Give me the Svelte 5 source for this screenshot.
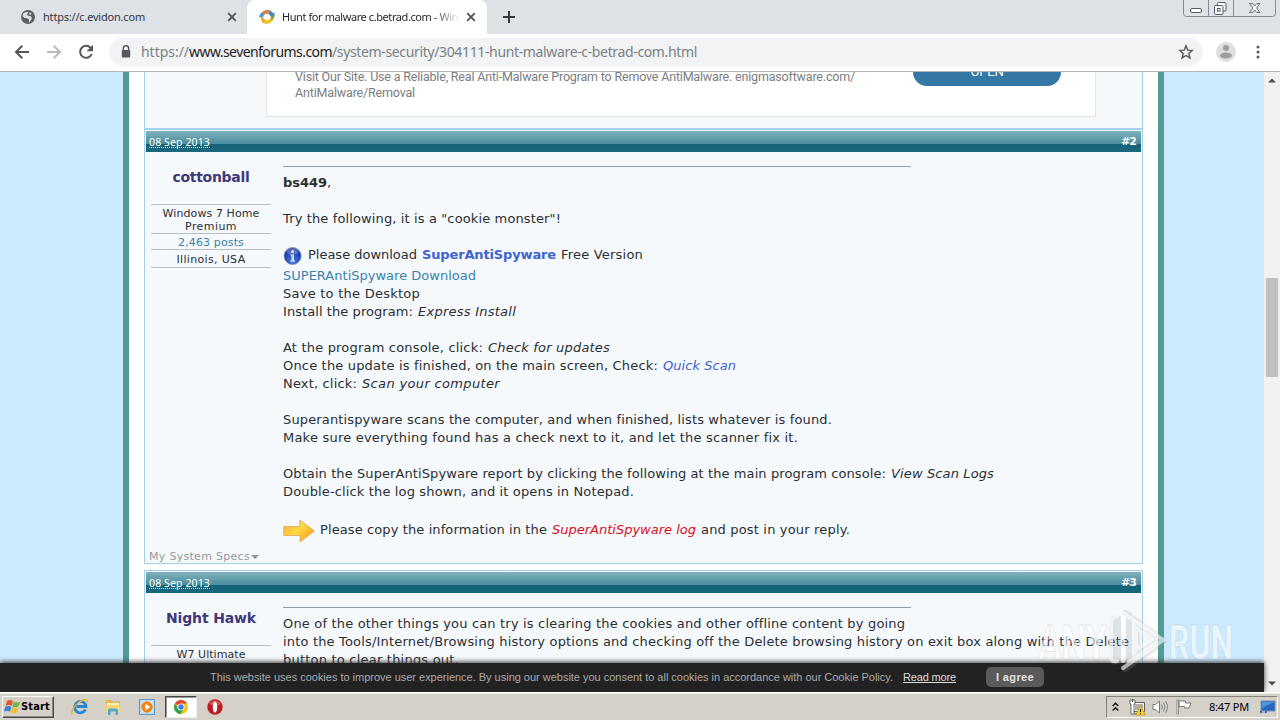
<script>
  // Spreads a run of text evenly so that it fills the given width.
  function fit(node, width) {
    const natural = node.getBoundingClientRect().width;
    const count = node.textContent.length;
    if (count) node.style.letterSpacing = (width - natural) / count + 'px';
  }

  const s = (t, w, c = '') => ({ t, w, c });
  const first = [
    { segs: [s('bs449', 44, 'bold'), s(',', 4, 'tight')] },
    { segs: [] },
    { segs: [s('Try the following, it is a "cookie monster"!', 278)] },
    { segs: [] },
    { icon: 'info', segs: [s('Please download', 109), s('SuperAntiSpyware', 134, 'bold royal'), s('Free Version', 82)] },
    { segs: [s('SUPERAntiSpyware Download', 193, 'link')] },
    { segs: [s('Save to the Desktop', 137)] },
    { segs: [s('Install the program:', 130), s('Express Install', 98, 'em')] },
    { segs: [] },
    { segs: [s('At the program console, click:', 200), s('Check for updates', 122, 'em')] },
    { segs: [s('Once the update is finished, on the main screen, Check:', 375), s('Quick Scan', 73, 'em royal')] },
    { segs: [s('Next, click:', 74), s('Scan your computer', 138, 'em')] },
    { segs: [] },
    { segs: [s('Superantispyware scans the computer, and when finished, lists whatever is found.', 549)] },
    { segs: [s('Make sure everything found has a check next to it, and let the scanner fix it.', 515)] },
    { segs: [] },
    { segs: [s('Obtain the SuperAntiSpyware report by clicking the following at the main program console:', 603), s('View Scan Logs', 103, 'em')] },
    { segs: [s('Double-click the log shown, and it opens in Notepad.', 351)] },
    { segs: [] },
    { icon: 'arrow', segs: [s('Please copy the information in the', 227), s('SuperAntiSpyware log', 144, 'em red'), s('and post in your reply.', 149)] }
  ];
  const second = [
    { segs: [s('One of the other things you can try is clearing the cookies and other offline content by going', 622)] },
    { segs: [s('into the Tools/Internet/Browsing history options and checking off the Delete browsing history on exit box along with the Delete', 846)] },
    { segs: [s('button to clear things out.', 176)] }
  ];
</script>

{#snippet lines(list)}
  {#each list as l}
    <div class="line {l.icon ?? ''}">
      {#if l.icon === 'info'}
        <svg width="20" height="20" viewBox="0 0 20 20">
          <defs>
            <radialGradient id="ball" cx=".5" cy=".8" r=".75"><stop offset="0" stop-color="#4e7fe0" /><stop offset=".6" stop-color="#2447b8" /><stop offset="1" stop-color="#182c94" /></radialGradient>
          </defs>
          <circle cx="9.600" cy="10" r="8.600" fill="url(#ball)" stroke="#8b98c8" stroke-width=".8" />
          <ellipse cx="9.600" cy="5.500" rx="6" ry="3.500" fill="#fff" opacity=".25" />
          <circle cx="9.600" cy="5.500" r="1.500" fill="#d8e6ff" />
          <path d="M7.600 8.500H11v6h1v1.200H7.400v-1.200h1V9.800h-1z" fill="#c4d8fb" />
        </svg>
      {:else if l.icon === 'arrow'}
        <svg class="arrowicon" width="34" height="26" viewBox="0 0 34 26">
          <defs><linearGradient id="gold" x2="1" y2=".7"><stop offset="0" stop-color="#f3ad27" /><stop offset=".5" stop-color="#ffd844" /><stop offset="1" stop-color="#f2a421" /></linearGradient></defs>
          <path d="M.8 8.500h16V2L31.500 13 17 24v-6.500H.8z" fill="url(#gold)" stroke="#e4b565" stroke-width="1" />
        </svg>
      {/if}
      {#each l.segs as g}<span class="seg {g.c}" use:fit={g.w}>{g.t}</span>{/each}
    </div>
  {/each}
{/snippet}

{#snippet head(n)}
  <div class="posthead">
    <span class="date"><span class="seg" use:fit={61}>08 Sep 2013</span></span>
    <b><span class="seg" use:fit={15}>#{n}</span></b>
  </div>
{/snippet}

<div class="screen">
  <div class="tabs">
    <div class="tab">
      <svg width="14" height="14" viewBox="0 0 14 14"><circle cx="7" cy="7" r="7" fill="#5b6065" /><path d="M2 3.500 5 2l2.500.3L6 4.500l1 1.300 2.500.2L11 8l-1.200 2.500-2 2.300.2-3.300-2-1.300L3.500 8 1.600 6.300z" fill="#dee1e6" /><path d="m8.500 2.200 2 1.300-.8 1.500-1.500-.8z" fill="#dee1e6" /></svg>
      <span class="seg" use:fit={102}>https://c.evidon.com</span>
      <svg class="x" width="10" height="10" viewBox="0 0 10 10"><path d="m1.200 1.200 7.600 7.600m0-7.600L1.200 8.800" stroke="#4e5358" stroke-width="1.800" /></svg>
    </div>
    <div class="tab active">
      <svg width="16" height="16" viewBox="0 0 16 16"><path d="M0 8.500C1 3 6 .5 11.500 1.500L9.800 4.500C7 4 5 5 4 8z" fill="#4a9bd6" /><path d="M3 3.500Q7 0 11.500 1.500L9.800 4.500Q7 4 4.500 5.800z" fill="#e77b35" /><path d="M15 8C14.500 13 10 16 5 14.500l2-3.500c2 .8 4-.3 4.500-3z" fill="#f3c32e" /><path d="M2 8C1.800 11 2.500 13.300 5 14.500L7 11C5.300 10.500 4.300 9.500 4.300 8z" fill="#f1a92e" /><path d="M16 5c0 3-1.500 5-4 6.500.8-2.500.5-4.300-1-6z" fill="#7aa04b" /><path d="M11.500 1.500 14 4l2-.5L12.500 8 9.500 5z" fill="#3f84c8" /></svg>
      <span class="title"><span class="seg" use:fit={176}>Hunt for malware c.betrad.com - Win</span></span>
      <svg class="x" width="10" height="10" viewBox="0 0 10 10"><path d="m1.200 1.200 7.600 7.600m0-7.600L1.200 8.800" stroke="#4e5358" stroke-width="1.800" /></svg>
    </div>
    <svg class="plus" width="12" height="12" viewBox="0 0 12 12"><path d="M6 0v12M0 6h12" stroke="#35393e" stroke-width="2" /></svg>
    <svg class="winbtns" width="94" height="18" viewBox="0 0 94 18">
      <path d="M.5 0v13.500q0 3 3 3h86q3 0 3-3V0M25.500 0v16M50.500 0v16" fill="#e0e3e8" stroke="#858a95" />
      <rect x="7.500" y="8.500" width="11" height="4" rx="1.500" fill="#fff" stroke="#555b68" />
      <rect x="34.500" y="2.500" width="8.500" height="8.500" rx="1" fill="#fff" stroke="#555b68" />
      <rect x="31.500" y="5.500" width="8.500" height="9" rx="1" fill="#fff" stroke="#555b68" /><rect x="34.500" y="8.500" width="2.600" height="2.600" fill="none" stroke="#555b68" />
      <path d="M66.500 3.500h3.300l2 2.500 2-2.500h3.200l-3.500 4.500 3.500 4.500h-3.200l-2-2.500-2 2.500h-3.300L70 8z" fill="#fff" stroke="#656a75" />
    </svg>
  </div>

  <div class="toolbar">
    <svg width="16" height="16" viewBox="0 0 16 16"><path d="M15 8H2.500M8.300 1.700 2 8l6.300 6.300" fill="none" stroke="#53575b" stroke-width="2" /></svg>
    <svg width="16" height="16" viewBox="0 0 16 16"><path d="M1 8h12.500M7.700 1.700 14 8l-6.300 6.300" fill="none" stroke="#b8babc" stroke-width="2" /></svg>
    <svg width="16" height="16" viewBox="0 0 16 16"><path d="M13.700 10A6 6 0 1 1 12.500 3.700L14 5.200" fill="none" stroke="#53575b" stroke-width="2" /><path d="M15 .8v6.400H8.600z" fill="#53575b" /></svg>
    <div class="omni">
      <svg width="10" height="14" viewBox="0 0 10 14"><path d="M2.300 6V3.500a2.700 2.700 0 0 1 5.400 0V6" fill="none" stroke="#55595e" stroke-width="1.400" /><rect x=".8" y="5" width="8.400" height="7.500" rx="1" fill="#55595e" /></svg>
      <div class="url"><span class="seg" use:fit={48}>https://</span><span class="seg host" use:fit={143}>www.sevenforums.com</span><span class="seg" use:fit={365}>/system-security/304111-hunt-malware-c-betrad-com.html</span></div>
      <svg class="star" width="16" height="16" viewBox="0 0 16 16"><path d="m8 1.800 1.700 4.300 4.600.3-3.500 3 1.100 4.500L8 11.500l-3.900 2.400 1.100-4.500-3.500-3 4.600-.3z" fill="none" stroke="#55595e" stroke-width="1.400" /></svg>
    </div>
    <svg class="avatar" width="20" height="20" viewBox="0 0 20 20"><circle cx="10" cy="10" r="10" fill="#dfdfdf" /><circle cx="10" cy="6" r="3" fill="#9d9d9d" /><ellipse cx="10" cy="13.500" rx="6" ry="3" fill="#9d9d9d" /></svg>
    <svg class="dots" width="4" height="14" viewBox="0 0 4 14"><circle cx="2" cy="2" r="1.500" fill="#55595e" /><circle cx="2" cy="7" r="1.500" fill="#55595e" /><circle cx="2" cy="12" r="1.500" fill="#55595e" /></svg>
  </div>

  <div class="view">
    <div class="site">
      <div class="sheet">
        <div class="adpost">
          <div class="ad">
            <div class="adtext">
              <div><span class="seg" use:fit={560}>Visit Our Site. Use a Reliable, Real Anti-Malware Program to Remove AntiMalware. enigmasoftware.com/</span></div>
              <div><span class="seg" use:fit={120}>AntiMalware/Removal</span></div>
            </div>
            <div class="open"><span class="seg" use:fit={33}>OPEN</span></div>
          </div>
        </div>
        <div class="post one">
          {@render head(2)}
          <div class="body">
            <div class="side">
              <div class="user"><span class="seg" use:fit={77}>cottonball</span></div>
              <div class="info two"><span class="seg" use:fit={97}>Windows 7 Home</span><span class="seg" use:fit={52}>Premium</span></div>
              <div class="info posts"><span class="seg" use:fit={66}>2,463 posts</span></div>
              <div class="info place"><span class="seg" use:fit={69}>Illinois, USA</span></div>
              <div class="specs"><span class="seg" use:fit={101}>My System Specs</span><i></i></div>
            </div>
            <div class="text"><div class="hr"></div>{@render lines(first)}</div>
          </div>
        </div>
        <div class="post">
          {@render head(3)}
          <div class="body">
            <div class="side">
              <div class="user"><span class="seg" use:fit={90}>Night Hawk</span></div>
              <div class="info two"><span class="seg" use:fit={69}>W7 Ultimate</span></div>
            </div>
            <div class="text"><div class="hr"></div>{@render lines(second)}</div>
          </div>
        </div>
      </div>
    </div>
    <div class="scroll">
      <svg width="8" height="5" viewBox="0 0 8 5"><path d="M0 4.500h8L4 .5z" fill="#4a4a4a" /></svg>
      <div class="thumb"></div>
      <svg class="down" width="8" height="5" viewBox="0 0 8 5"><path d="M0 .5h8L4 4.500z" fill="#4a4a4a" /></svg>
    </div>
    <div class="cookie">
      <span class="seg" use:fit={683}>This website uses cookies to improve user experience. By using our website you consent to all cookies in accordance with our Cookie Policy.</span>
      <span class="seg more" use:fit={53}>Read more</span>
      <div class="agree"><span class="seg" use:fit={38}>I agree</span></div>
    </div>
    <svg class="mark" width="206" height="76" viewBox="0 0 206 76">
      <g font-family="Roboto, sans-serif" font-size="49" font-weight="700" fill="#fff" fill-opacity=".6" stroke="#9aa5ac" stroke-opacity=".22">
        <text x="8" y="55" textLength="69" lengthAdjust="spacingAndGlyphs">ANY</text>
        <text x="139" y="55" textLength="64" lengthAdjust="spacingAndGlyphs">RUN</text>
      </g>
      <g fill="none" stroke-linejoin="round" stroke-linecap="round">
        <path d="M82 18v36q0 5 6 3V14q-6-1-6 4M95 9l38 27-34 22V11M95 65l38-27M107 24l16 11-16 11z" stroke="#8b969e" stroke-opacity=".22" stroke-width="6" />
        <path d="M87 12q-6 1-6 6v36q0 4 6 3M93 57V9l40 27-40 28M99 58l26-18M106 24l16 11-16 11z" stroke="#fff" stroke-opacity=".6" stroke-width="4" />
      </g>
    </svg>
  </div>

  <div class="taskbar">
    <div class="start">
      <svg width="17" height="16" viewBox="0 0 17 16"><path d="M3 2q3-2 6 .2L7.600 7Q5 5.200 1.600 6.800z" fill="#e4572e" /><path d="M9.800 2.600q3 1.800 6.200.2L14.600 7.600q-3 1.600-6.200-.2z" fill="#73b543" /><path d="M1.300 7.800q3.500-1.600 6 .2L6 12.700Q3.500 11 0 12.600z" fill="#3b7fd0" /><path d="M8.100 8.400q3 1.800 6.200.2l-1.400 4.800q-3 1.600-6.200-.2z" fill="#f4bf29" /></svg>
      <b><span class="seg" use:fit={29}>Start</span></b>
    </div>
    <svg class="ie" width="18" height="18" viewBox="0 0 18 18"><path d="M14.500 11.500A5.700 5.700 0 1 1 15 8.500H5.500" fill="none" stroke="#2687d2" stroke-width="2.800" /><path d="M1.500 16.500C-1 13 5 5 11 2.500c4-1.800 6-.8 5 2" fill="none" stroke="#e8b53a" stroke-width="1.500" /></svg>
    <svg class="folder" width="18" height="18" viewBox="0 0 18 18"><path d="M2 2h5l1 1.500h8V14H2z" fill="#dcb951" /><path d="M3 5h12v4H3z" fill="#fff4bc" /><path d="M1.500 7h15v7h-15z" fill="#f2d873" /><path d="M4 17v-4.500q0-2 1.500-2h7q1.500 0 1.500 2V17h-2.500v-3.500h-5V17z" fill="#52a9d6" /></svg>
    <svg class="wmp" width="16" height="16" viewBox="0 0 16 16"><rect x=".5" y=".5" width="15" height="15" fill="#b9d9ef" stroke="#5e9acb" /><rect x="2.500" y="2.500" width="11" height="11" fill="#e5f1f9" /><circle cx="8" cy="8" r="5.700" fill="#f08616" /><path d="m6.300 4.800 5 3.200-5 3.200z" fill="#fff" /></svg>
    <div class="running"><svg width="14" height="14" viewBox="0 0 16 16"><circle cx="8" cy="8" r="8" fill="#fbc116" /><path d="M8 8 1.100 4A8 8 0 0 1 14.900 4H8z" fill="#df4535" /><path d="M1.100 4A8 8 0 0 0 7.500 16L11.200 10 8 8 4.600 9.800z" fill="#2ba24c" /><circle cx="8" cy="8" r="4" fill="#fff" /><circle cx="8" cy="8" r="3.100" fill="#3d7de8" /></svg></div>
    <svg class="opera" width="16" height="16" viewBox="0 0 16 16"><circle cx="8" cy="8" r="7.700" fill="#bd1d22" /><path d="M2 5a7 7 0 0 1 12 0Q8 8 2 5" fill="#e46d68" opacity=".7" /><ellipse cx="8" cy="8" rx="2.200" ry="5.500" fill="#fff" /></svg>
    <div class="tray">
      <svg class="chev" width="7" height="10" viewBox="0 0 7 10"><path d="m.7 4 2.800-2.700L6.300 4M.7 8.500l2.800-2.700 2.800 2.700" fill="none" stroke="#111" stroke-width="1.400" /></svg>
      <svg class="net" width="17" height="17" viewBox="0 0 17 17"><path d="M4.500 3.500h11v9h-11z" fill="#b0b0aa" stroke="#5f5f5f" /><path d="M5.500 4.500h9v7h-9z" fill="none" stroke="#f4f4f0" /><path d="M1 1h5v4H5v10H2V5H1z" fill="#fff" stroke="#5c5c5c" stroke-width=".9" /><path d="M3.500 0v3M5 15h4" stroke="#5c5c5c" /><path d="m11.500 7 4.800 9H6.700z" fill="#ffd626" stroke="#b99916" stroke-width=".7" /><path d="M11.500 10v3m0 1v1" stroke="#222" stroke-width="1.200" /></svg>
      <svg class="vol" width="18" height="16" viewBox="0 0 18 16"><path d="M1 5.500h2.500l4-3.500v12l-4-3.500H1z" fill="#fff" stroke="#777" /><path d="M9.500 5.500q1.500 2.500 0 5M11.500 3.700q3 4.300 0 8.600M13.500 2q4 6 0 12" fill="none" stroke="#858585" /></svg>
      <svg class="flag" width="17" height="16" viewBox="0 0 17 16"><path d="M1 1h1.500v14H1z" fill="#fff" stroke="#777" stroke-width=".8" /><path d="M3 2h6.500v2H15l-2 5H8.500V7.500H3z" fill="#fff" stroke="#777" /></svg>
      <span class="seg" use:fit={40}>8:47 PM</span>
      <svg class="desk" width="16" height="14" viewBox="0 0 16 14"><path d="M1 1h14v10H1z" fill="#2868bc" stroke="#7194bf" /><path d="M2 2h12L2 8z" fill="#4e94db" /><path d="M0 11h7v2H0z" fill="#426894" /><path d="M2 12h3" stroke="#fff" /></svg>
    </div>
  </div>
</div>

<style>
  :global(body) { margin: 0; overflow: hidden; }
  .screen { width: 1280px; height: 720px; display: flex; flex-direction: column; overflow: hidden; background: #fff; color: #2b2f33; font: 13px/18px "DejaVu Sans", Verdana, sans-serif; }
  .screen * { box-sizing: border-box; }
  svg { display: block; flex: none; }
  .seg { display: inline-block; white-space: pre; flex: none; }

  .tabs { height: 34px; flex: none; display: flex; background: #dee1e6; font: 11px/34px "Noto Sans", Tahoma, sans-serif; color: #34383c; }
  .tab { width: 247px; padding: 0 10px 0 21px; display: flex; align-items: center; gap: 8px; }
  .tab .x { margin-left: auto; }
  .active { width: 240px; padding: 0 11px 0 12px; gap: 7px; background: #fff; border-radius: 8px 8px 0 0; color: #1f2327; }
  .title { width: 176px; height: 34px; overflow: hidden; white-space: nowrap; mask-image: linear-gradient(90deg, #000 150px, transparent 178px); }
  .plus { margin: 11px 0 0 16px; }
  .winbtns { margin-left: auto; margin-right: 3px; }

  .toolbar { height: 38px; flex: none; display: flex; align-items: center; padding: 0 19px 2px 14px; border-bottom: 1px solid #afb5b4; background: #fff; gap: 16px; }
  .omni { height: 28px; width: 1094px; margin-left: -1px; padding: 0 9px 0 12px; display: flex; align-items: center; background: #f1f3f4; border-radius: 14px; gap: 10px; }
  .url { font: 14px/28px "Noto Sans", Tahoma, sans-serif; display: flex; color: #7b8085; }
  .host { color: #1d2125; }
  .star { margin-left: auto; }
  .avatar { margin-left: -3px; }
  .dots { margin-left: 4px; margin-right: -1px; }

  .view { position: relative; height: 620px; flex: none; display: flex; overflow: hidden; }
  .site { width: 1264px; height: 620px; padding-left: 123px; background: #cceafd; overflow: hidden; }
  .sheet { width: 1041px; height: 620px; padding: 0 15px; background: #fff; border: solid #539a94; border-width: 0 6px; overflow: hidden; }
  .adpost { width: 999px; height: 57px; padding-left: 121px; background: #f5f9fc; border: 1px solid #a2d0ee; border-width: 0 1px 1px; }
  .ad { width: 830px; height: 45px; padding-left: 28px; display: flex; background: #fff; border: 1px solid #dfe4e8; border-top: 0; }
  .adtext { width: 618px; margin-top: -3px; font: 12.500px/16px Roboto, sans-serif; color: #7b7d80; }
  .open { width: 148px; height: 28px; margin-top: -14px; border-radius: 14px; background: #3577a5; color: #fff; font: 13px/28px Roboto, sans-serif; text-align: center; }
  .post { width: 999px; border: 1px solid #a2d0e4; background: #f5f9fc; padding: 1px 1px 0; }
  .one { height: 435px; margin-bottom: 6px; border-top-color: #a2d0ee; }
  .posthead { height: 21px; padding: 0 5px 0 3px; display: flex; justify-content: space-between; color: #fff; background: linear-gradient(#81b2bc, #4a8d9f 60%, #136278 61%, #1a687b); font-size: 11px; line-height: 22px; }
  .date { height: 17px; font: 10.500px/22px "Noto Sans", Tahoma, sans-serif; border-bottom: 1px dotted #d6e7eb; display: flex; }
  .body { display: flex; }
  .side { width: 120px; margin-left: 5px; display: flex; flex-direction: column; font-size: 11px; line-height: 13px; text-align: center; height: 411px; }
  .user { height: 53px; flex: none; padding-top: 16px; border-bottom: 1px solid #b8bfc4; font-weight: bold; font-size: 14px; line-height: 18px; color: #403879; }
  .info { flex: none; border-bottom: 1px solid #b8bfc4; }
  .two { height: 29px; padding-top: 2px; display: flex; flex-direction: column; align-items: center; }
  .posts { height: 16px; padding-top: 2px; color: #3b82ae; }
  .place { height: 18px; padding-top: 3px; }
  .specs { margin: auto 0 0 -2px; display: flex; align-items: center; color: #969a9e; }
  .specs i { margin-left: 1px; border: 4px solid transparent; border-top-color: #8f9498; border-bottom: 0; }
  .text { margin-left: 12px; padding-top: 14px; }
  .hr { width: 628px; height: 1px; background: #929da6; margin-bottom: 7px; }
  .line { height: 18px; display: flex; gap: 5px; white-space: nowrap; }
  .line.info { height: 21px; border: 0; }
  .line.arrow { padding-top: 2px; }
  .arrowicon { margin: -3px -2px 0 0; }
  .bold { font-weight: bold; }
  .tight { margin-left: -5px; }
  .em { font-style: italic; }
  .royal { color: #3f63cf; }
  .link { color: #3b82ae; }
  .red { color: #d9101c; }

  .scroll { width: 16px; background: #f1f1f1; display: flex; flex-direction: column; align-items: center; padding: 6px 0 6px; }
  .thumb { width: 12px; height: 99px; margin-top: 195px; background: #c1c1c1; }
  .down { margin-top: auto; }
  .cookie { position: absolute; left: 0; bottom: 0; width: 1264px; height: 29px; padding: 4px 0 0 210px; display: flex; background: #222; box-shadow: 0 -1px 5px #333; font: 11px/20px "Liberation Sans", Arial, sans-serif; color: #aaa; }
  .more { margin-left: 10px; color: #ddd; text-decoration: underline; }
  .agree { width: 58px; height: 20px; margin-left: 30px; border-radius: 5px; background: #5a5a5a; color: #e3e3e3; font-weight: bold; text-align: center; }
  .mark { position: absolute; left: 1030px; top: 532px; }

  .taskbar { height: 28px; flex: none; padding: 3px 2px 2px; display: flex; align-items: center; background: #d5d0c8; border-top: 1px solid #fff; box-shadow: inset 0 1px #eeeae4; }
  .start { width: 52px; height: 22px; display: flex; align-items: center; padding-left: 1px; border: 1px solid; border-color: #fff #4a4a4a #4a4a4a #fff; box-shadow: inset -1px -1px #8a8782; font: 11px/20px "DejaVu Sans Condensed", "DejaVu Sans", Tahoma, sans-serif; color: #000; }
  .ie { margin-left: 17px; }
  .folder { margin-left: 15px; }
  .wmp { margin-left: 17px; }
  .running { width: 32px; height: 22px; margin-left: 10px; display: flex; align-items: center; justify-content: center; background: #fff; border: 1px solid; border-color: #444 #eee #eee #444; box-shadow: inset 1px 1px #999; }
  .opera { margin-left: 10px; }
  .tray { width: 172px; height: 22px; margin-left: auto; display: flex; align-items: center; padding-left: 5px; border: 1px solid; border-color: #85817b #fff #fff #85817b; font: 11px/20px "Noto Sans", Tahoma, sans-serif; color: #000; }
  .chev { margin-right: 10px; }
  .net { margin-right: 6px; }
  .vol { margin-right: 6px; }
  .flag { margin-right: 16px; }
  .desk { margin-left: 11px; }
</style>
